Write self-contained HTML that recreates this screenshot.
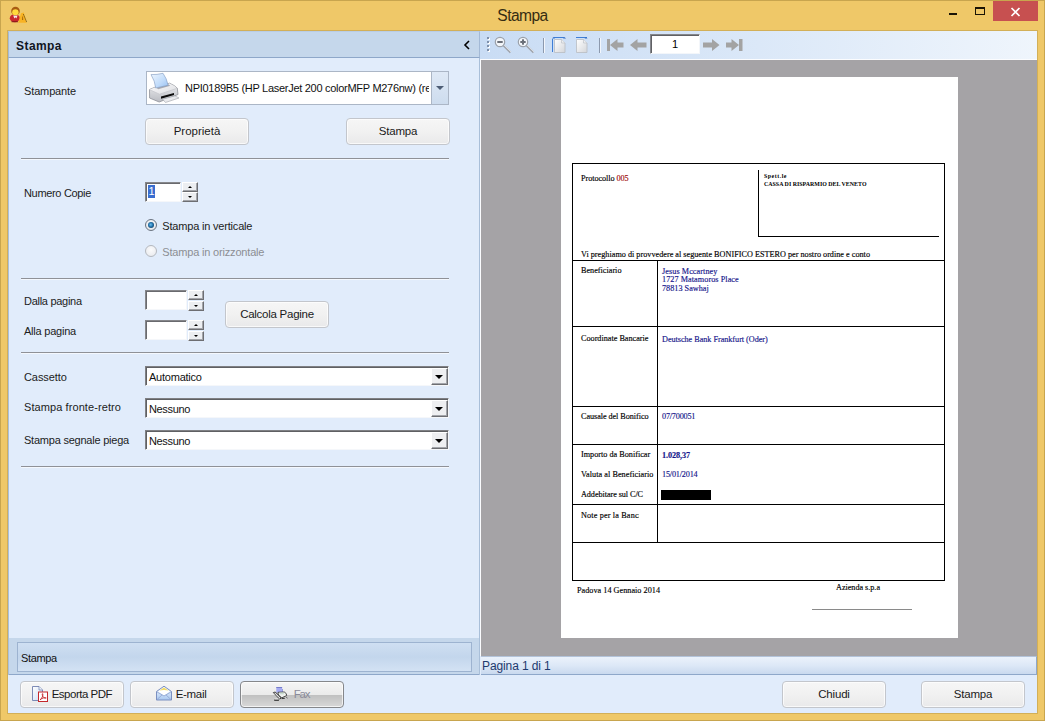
<!DOCTYPE html>
<html><head><meta charset="utf-8"><title>Stampa</title>
<style>
*{box-sizing:border-box;margin:0;padding:0}
html,body{width:1045px;height:721px;overflow:hidden}
body{background:#efc868;font-family:"Liberation Sans",sans-serif;font-size:11px;color:#1a1a1a;position:relative}
.abs{position:absolute}
#frame{left:0;top:0;width:1045px;height:721px;border:1px solid #c8a54e;background:#efc868}
#title{left:0;top:6.600px;width:1045px;text-align:center;font-size:15.600px;line-height:18px;color:#362c12}
#content{left:7px;top:30px;width:1031px;height:684px;background:#e1ecfb;border:1px solid #d2af58}
/* left panel */
#lp{left:8px;top:31px;width:472px;height:644px;background:#e1ecfb;border:1px solid #a9bfd9;border-top:none}
#lph{left:8px;top:31px;width:472px;height:27px;background:#c5d7eb;border:1px solid #a3b9d6;border-top:1px solid #b9cde6;border-bottom:1px solid #8ea7c9}
#lph b{position:absolute;left:7px;top:7px;font-size:12px;line-height:14px;color:#10151f}
.lbl{position:absolute;left:24px;font-size:11px;line-height:13px;white-space:nowrap;color:#1c1c1c}
.sep{position:absolute;left:21px;width:428px;height:2px;border-top:1px solid #8f9197;border-bottom:1px solid #f4f8fe}
.btn{position:absolute;height:27px;border:1px solid #c3c6cc;border-radius:4px;background:linear-gradient(#f6f6f6,#f1f1f1 50%,#e9e9ea);text-align:center;font-size:11.5px;line-height:25px;color:#1a1a1a;white-space:nowrap;box-shadow:inset 0 0 0 1px rgba(255,255,255,.7)}
.combo{position:absolute;left:145px;width:304px;height:20px;background:#fff;border:1px solid;border-color:#7f8084 #f5f7fa #f5f7fa #7f8084;box-shadow:inset 1px 1px 0 #5f6063;font-size:11px;line-height:16px;padding:2px 0 0 3px;color:#111}
.combo i{position:absolute;right:0;top:1px;width:17px;height:17px;background:#eeeff1;border:1px solid;border-color:#fff #6d6e72 #6d6e72 #fff;box-shadow:inset -1px -1px 0 #a3a5aa}
.combo i:after{content:"";position:absolute;left:3px;top:6px;border:4px solid transparent;border-top:4px solid #000;border-bottom:none}
.spin{position:absolute;height:20px;background:#fff;border:1px solid;border-color:#86878b #f5f7fa #f5f7fa #86878b;box-shadow:inset 1px 1px 0 #696a6e}
.sb{position:absolute;width:16px;height:10px;background:#eceef1;border:1px solid;border-color:#fff #6d6e72 #6d6e72 #fff;box-shadow:inset -1px -1px 0 #a3a5aa}
.sb:after{content:"";position:absolute;left:5px;top:3px;border:2px solid transparent}
.sb.up:after{border-bottom:2px solid #000;border-top:none}
.sb.dn:after{border-top:2px solid #000;border-bottom:none}

.radio{position:absolute;width:12px;height:12px;border-radius:50%;border:1px solid #6b7480;background:radial-gradient(circle at 50% 40%,#fff,#d9dde3)}
.radio u{position:absolute;left:2px;top:2px;width:6px;height:6px;border-radius:50%;background:radial-gradient(circle at 45% 45%,#6fc0ee,#2272aa 45%,#123a5e 80%)}
.radio.dis{border-color:#b4b8be;background:radial-gradient(circle at 50% 40%,#fbfbfc,#e6e8ec)}

#doc{position:absolute;left:0;top:0;font-family:"Liberation Serif",serif;font-size:8.2px;line-height:10px;color:#000}
#doc div{position:absolute;white-space:nowrap}
#doc .t{color:#000;margin-top:1.2px;-webkit-text-stroke:.15px #000}
#doc .v{color:#15158a;margin-top:1.2px;-webkit-text-stroke:.15px #15158a}
#doc .hl{left:572px;width:373px;height:1px;background:#000}
</style></head><body>
<div id="frame" class="abs"></div>
<div id="title" class="abs"><span style="letter-spacing:-0.558px">Stampa</span></div>
<div id="content" class="abs"></div>
<div id="lp" class="abs"></div>
<div id="lph" class="abs"><b><span style="letter-spacing:0.440px">Stampa</span></b></div>

<!-- left panel content -->
<svg class="abs" style="left:463px;top:40px" width="8" height="10" viewBox="0 0 8 10"><path d="M6 1 L2 5 L6 9" fill="none" stroke="#000" stroke-width="1.6"/></svg>
<div class="lbl" style="top:85px"><span style="letter-spacing:-0.134px">Stampante</span></div>
<div class="abs" id="pcombo" style="left:146px;top:71px;width:303px;height:34px;background:#fff;border:1px solid #abb6c6">
  <div class="abs" style="left:38px;top:9.700px;font-size:11px;line-height:13px;white-space:nowrap;width:244px;overflow:hidden;color:#111"><span style="letter-spacing:-0.286px">NPI0189B5 (HP LaserJet 200 colorMFP M276nw) (re</span></div>
  <div class="abs" style="right:0;top:0;width:17px;height:32px;background:linear-gradient(#dfe9f6,#cddcee);border-left:1px solid #abb6c6"></div>
  <div class="abs" style="right:4px;top:14px;border:4px solid transparent;border-top:4px solid #4d5d75;border-bottom:none"></div>
</div>
<div class="btn" style="left:145px;top:118px;width:104px"><span style="letter-spacing:0.009px">Proprietà</span></div>
<div class="btn" style="left:346px;top:118px;width:104px"><span style="letter-spacing:-0.207px">Stampa</span></div>
<div class="sep" style="top:158px"></div>
<div class="lbl" style="top:187px"><span style="letter-spacing:-0.327px">Numero Copie</span></div>
<div class="spin" style="left:145px;top:182px;width:36px"><span class="abs" style="left:2px;top:2px;width:7px;height:13px;text-align:center;background:#3a6ed0;color:#fff;font-size:11px;line-height:13px">1</span></div>
<div class="sb up" style="left:182px;top:182px"></div><div class="sb dn" style="left:182px;top:192px"></div>
<div class="radio" style="left:145px;top:219px"><u></u></div>
<div class="lbl" style="left:162.300px;top:220px"><span style="letter-spacing:-0.187px">Stampa in verticale</span></div>
<div class="radio dis" style="left:145px;top:245px"></div>
<div class="lbl" style="left:162.300px;top:246px;color:#8c8e93"><span style="letter-spacing:-0.180px">Stampa in orizzontale</span></div>
<div class="sep" style="top:278px"></div>
<div class="lbl" style="top:295px"><span style="letter-spacing:-0.284px">Dalla pagina</span></div>
<div class="spin" style="left:145px;top:290px;width:42px"></div>
<div class="sb up" style="left:188px;top:290px"></div><div class="sb dn" style="left:188px;top:301px"></div>
<div class="lbl" style="top:325px"><span style="letter-spacing:-0.222px">Alla pagina</span></div>
<div class="spin" style="left:145px;top:320px;width:42px"></div>
<div class="sb up" style="left:188px;top:320px"></div><div class="sb dn" style="left:188px;top:331px"></div>
<div class="btn" style="left:225px;top:301px;width:104px"><span style="letter-spacing:-0.258px">Calcola Pagine</span></div>
<div class="sep" style="top:352px"></div>
<div class="lbl" style="top:371px"><span style="letter-spacing:-0.084px">Cassetto</span></div>
<div class="combo" style="top:366px"><span style="letter-spacing:-0.228px">Automatico</span><i></i></div>
<div class="lbl" style="top:401px"><span style="letter-spacing:0.086px">Stampa fronte-retro</span></div>
<div class="combo" style="top:398px"><span style="letter-spacing:-0.346px">Nessuno</span><i></i></div>
<div class="lbl" style="top:434px"><span style="letter-spacing:-0.223px">Stampa segnale piega</span></div>
<div class="combo" style="top:430px"><span style="letter-spacing:-0.346px">Nessuno</span><i></i></div>
<div class="sep" style="top:466px"></div>
<!-- nav band -->
<div class="abs" style="left:9px;top:638px;width:470px;height:37px;background:#c5d7eb;border-bottom:1px solid #8ea7c9"></div>
<div class="abs" style="left:17px;top:642px;width:455px;height:30px;border:1px solid #9db3d0;background:linear-gradient(#cfdff2,#c3d6ec 50%,#d3e2f4)"><span class="abs" style="left:3px;top:9px;font-size:11px;line-height:13px;color:#111"><span style="letter-spacing:-0.370px">Stampa</span></span></div>

<!-- right side -->
<div class="abs" id="tb" style="left:480px;top:31px;width:557px;height:29px;background:linear-gradient(90deg,#c9dcf4,#dbe8f8 50%,#eff5fc);border-bottom:1px solid #f4f8fd"></div>
<div class="abs" id="gray" style="left:480px;top:59px;width:557px;height:597px;background:#a5a3a6;border-left:1px solid #fbfcfe;border-top:1px solid #fbfcfe"></div>
<div class="abs" id="page" style="left:561px;top:77px;width:397px;height:561px;background:#fff"></div>
<div class="abs" id="status" style="left:481px;top:656px;width:556px;height:19px;background:linear-gradient(#ebf2fb,#dde8f7 50%,#c9d9ee);border-top:1px solid #b3c3d9;border-bottom:1px solid #8ea7c9;border-right:1px solid #8ea7c9"><span class="abs" style="left:1px;top:2px;font-size:12px;line-height:14px;color:#1e3a6e;white-space:nowrap"><span style="letter-spacing:-0.113px">Pagina 1 di 1</span></span></div>
<div id="doc">
<div style="left:572px;top:163px;width:373px;height:418px;border:1px solid #000"></div>
<div class="hl" style="top:260px"></div>
<div class="hl" style="top:326px"></div>
<div class="hl" style="top:406px"></div>
<div class="hl" style="top:444px"></div>
<div class="hl" style="top:504px"></div>
<div class="hl" style="top:542px"></div>
<div style="left:657px;top:260px;width:1px;height:283px;background:#000"></div>
<div style="left:758px;top:170px;width:181px;height:67px;border-left:1px solid #000;border-bottom:1px solid #000"></div>
<div class="t" style="left:581px;top:173.2px;"><span style="letter-spacing:-0.068px">Protocollo <span style="color:#a00808;-webkit-text-stroke:.15px #a00808">005</span></span></div>
<div style="left:764px;top:171.6px;font-size:5.9px;line-height:8px;font-weight:bold"><span style="letter-spacing:0.521px">Spett.le</span></div>
<div style="left:764px;top:179.6px;font-size:5.9px;line-height:8px;font-weight:bold"><span style="letter-spacing:0.024px">CASSA DI RISPARMIO DEL VENETO</span></div>
<div class="t" style="left:581px;top:249.2px;"><span style="letter-spacing:0.009px">Vi preghiamo di provvedere al seguente BONIFICO ESTERO per nostro ordine e conto</span></div>
<div class="t" style="left:581px;top:264.7px;"><span style="letter-spacing:0.003px">Beneficiario</span></div>
<div class="v" style="left:662px;top:265.9px;"><span style="letter-spacing:0.077px">Jesus Mccartney</span></div>
<div class="v" style="left:662px;top:274.2px;"><span style="letter-spacing:0.062px">1727 Matamoros Place</span></div>
<div class="v" style="left:662px;top:283.2px;"><span style="letter-spacing:0.010px">78813 Sawhaj</span></div>
<div class="t" style="left:581px;top:332.5px;"><span style="letter-spacing:-0.002px">Coordinate Bancarie</span></div>
<div class="v" style="left:662px;top:334.2px;"><span style="letter-spacing:-0.030px">Deutsche Bank Frankfurt (Oder)</span></div>
<div class="t" style="left:581px;top:411.2px;"><span style="letter-spacing:-0.059px">Causale del Bonifico</span></div>
<div class="v" style="left:662px;top:411.2px;"><span style="letter-spacing:-0.198px">07/700051</span></div>
<div class="t" style="left:581px;top:448.7px;"><span style="letter-spacing:0.006px">Importo da Bonificar</span></div>
<div class="v" style="left:662px;top:450.2px;font-weight:bold"><span style="letter-spacing:-0.082px">1.028,37</span></div>
<div class="t" style="left:581px;top:468.5px;"><span style="letter-spacing:0.050px">Valuta al Beneficiario</span></div>
<div class="v" style="left:662px;top:469.2px;"><span style="letter-spacing:-0.181px">15/01/2014</span></div>
<div class="t" style="left:581px;top:489.0px;"><span style="letter-spacing:-0.068px">Addebitare sul C/C</span></div>
<div style="left:661px;top:490px;width:50px;height:10px;background:#000"></div>
<div class="t" style="left:581px;top:509.7px;width:58.300px;overflow:hidden"><span style="letter-spacing:0.153px">Note per la Banca</span></div>
<div class="t" style="left:577px;top:585.2px;"><span style="letter-spacing:0.021px">Padova 14 Gennaio 2014</span></div>
<div class="t" style="left:836px;top:582.2px;"><span style="letter-spacing:-0.026px">Azienda s.p.a</span></div>
<div style="left:812px;top:609px;width:100px;height:1px;background:#8a8a8a"></div>
</div>
<!-- bottom buttons -->
<div class="btn" style="left:20px;top:681px;width:104px;text-align:left;padding-left:30.7px"><span style="letter-spacing:-0.503px">Esporta PDF</span></div>
<div class="btn" style="left:130px;top:681px;width:104px;text-align:left;padding-left:44.7px"><span style="letter-spacing:-0.316px">E-mail</span></div>
<div class="btn" id="fax" style="left:240px;top:681px;width:104px;border-color:#85878b;background:linear-gradient(#f5f5f5,#ebebeb 50%,#bfbfbf 50%,#d8d8d8);color:#8b8b9a;text-align:left;padding-left:52.8px"><span style="letter-spacing:-1.224px">Fax</span></div>
<div class="btn" style="left:782px;top:681px;width:104px"><span style="letter-spacing:-0.185px">Chiudi</span></div>
<div class="btn" style="left:921px;top:681px;width:104px"><span style="letter-spacing:-0.157px">Stampa</span></div>
<!-- window controls -->
<div class="abs" style="left:993px;top:1px;width:45px;height:20px;background:#c75050"></div>
<svg class="abs" style="left:1010px;top:6.500px" width="11" height="10" viewBox="0 0 11 10"><path d="M1.500 1 L9.500 9 M9.500 1 L1.500 9" stroke="#fff" stroke-width="1.700" fill="none"/></svg>
<div class="abs" style="left:949px;top:13px;width:8px;height:2px;background:#1a1405"></div>
<div class="abs" style="left:975px;top:7px;width:10px;height:8px;border:1px solid #1a1405;border-top-width:2px"></div>

<!-- app icon -->
<svg class="abs" style="left:8px;top:5px" width="20" height="20" viewBox="0 0 20 20">
<ellipse cx="6.8" cy="13.2" rx="5" ry="4" fill="#c9282c"/><path d="M3.5 16.3h6.5v.9h-6.5z" fill="#7a1418"/>
<path d="M5.2 10.4l1.2 3 1-1.2 1 1.2 1.2-3z" fill="#f4e9e9"/>
<circle cx="7.5" cy="6" r="4.3" fill="#a85c12"/><ellipse cx="7.4" cy="7.2" rx="3.2" ry="3" fill="#ffd93c"/>
<path d="M13 8.200 L15.800 7.600 L18.800 17.800 H10.200 Z" fill="#f8b324"/><path d="M14.2 11.5l.8 0 .2 3.4h-1.2z" fill="#a86a10"/>
<path d="M15.5 9.5l3.2 7.6" stroke="#2a1a05" stroke-width="1" stroke-dasharray="1 1.2" fill="none"/>
</svg>
<!-- printer icon -->
<svg class="abs" style="left:148px;top:72px" width="32" height="32" viewBox="0 0 32 32">
<defs><linearGradient id="pg" x1="0" y1="0" x2="1" y2="1"><stop offset="0" stop-color="#eef6ff"/><stop offset=".6" stop-color="#c0dbfa"/><stop offset="1" stop-color="#98c0f2"/></linearGradient>
<linearGradient id="bt" x1="0" y1="0" x2="1" y2="1"><stop offset="0" stop-color="#fbfbfc"/><stop offset="1" stop-color="#dcdde1"/></linearGradient>
<linearGradient id="bf" x1="0" y1="0" x2="0" y2="1"><stop offset="0" stop-color="#eeeff1"/><stop offset="1" stop-color="#b9bbc2"/></linearGradient></defs>
<path d="M1.500 17.500 L7.500 15 L21.500 11.200 Q27 13.500 29.300 16.200 L30 22.500 L11.200 30 L1.600 26 Z" fill="url(#bf)" stroke="#8e9098" stroke-width=".8" stroke-linejoin="round"/>
<path d="M1.700 17.600 L7.500 15.200 L21.500 11.400 Q26.500 13.500 29 16.300 L11.500 22.200 Z" fill="url(#bt)"/>
<path d="M1.700 17.800 L11.500 22.200 L29 16.400" fill="none" stroke="#c4c6cc" stroke-width=".7"/>
<path d="M8.500 15.800 L20.500 12.600 L22.300 13.800 L10.200 17.200Z" fill="#a9abb3"/>
<path d="M3 2.600 Q9 2.800 15 1.300 Q18.500 6 20.200 13.200 L7.700 16 Q7 9 3 2.600Z" fill="url(#pg)" stroke="#7d97bd" stroke-width=".6"/>
<path d="M13 24.500 L26 21 L26 23 L13 26.800Z" fill="#0c0c0c"/>
<path d="M14.500 27.200 L27 23.900 L31 26 L17.500 30.500Z" fill="#e9eaed" stroke="#a0a2a9" stroke-width=".6"/>
</svg>
<!-- toolbar icons -->
<svg class="abs" style="left:481px;top:31px" width="270" height="28" viewBox="0 0 270 28">
<g fill="#fff"><rect x="7" y="7" width="2" height="2"/><rect x="7" y="11" width="2" height="2"/><rect x="7" y="15" width="2" height="2"/><rect x="7" y="19" width="2" height="2"/></g>
<g fill="#7f90ab"><rect x="6" y="6" width="2" height="2"/><rect x="6" y="10" width="2" height="2"/><rect x="6" y="14" width="2" height="2"/><rect x="6" y="18" width="2" height="2"/></g>
<!-- zoom out -->
<path d="M22.5 14.5 L29.5 21.5" stroke="#a1a6ae" stroke-width="2"/><path d="M23 14 L30 21" stroke="#e6e9ee" stroke-width=".8"/>
<circle cx="19" cy="11" r="4.7" fill="#f3f6fa" stroke="#9ba1aa" stroke-width="1.2"/><rect x="16.3" y="10" width="5.4" height="2" fill="#6a6f78"/>
<!-- zoom in -->
<path d="M45.5 14.5 L52.5 21.5" stroke="#a1a6ae" stroke-width="2"/><path d="M46 14 L53 21" stroke="#e6e9ee" stroke-width=".8"/>
<circle cx="42" cy="11" r="4.7" fill="#f3f6fa" stroke="#9ba1aa" stroke-width="1.2"/><rect x="39.3" y="10" width="5.4" height="2" fill="#6a6f78"/><rect x="41" y="8.3" width="2" height="5.4" fill="#6a6f78"/>
<!-- sep -->
<rect x="62" y="7" width="1" height="15" fill="#8c99ae"/><rect x="63" y="7" width="1" height="15" fill="#f2f6fc"/>
<!-- page 1 -->
<defs><linearGradient id="pp" x1="0" y1="0" x2="1" y2="1"><stop offset="0" stop-color="#fff"/><stop offset="1" stop-color="#d4d6da"/></linearGradient></defs>
<path d="M73.5 8.5 H80.5 L84 12 V21.5 H73.5Z" fill="url(#pp)" stroke="#b9bcc2" stroke-width=".8"/><path d="M80.5 8.5 V12 H84" fill="#eceef0" stroke="#b9bcc2" stroke-width=".6"/>
<path d="M73 6.5 H83" stroke="#3f7ed6" stroke-width="1"/><path d="M71.5 8 V21" stroke="#3f7ed6" stroke-width="1"/>
<path d="M72.5 6 l1.5 1.5 h-3z M83.5 6 l1.5 1.5 h-3z" fill="#2f6cc4"/>
<!-- page 2 -->
<path d="M95.500 8.500 H102.500 L106 12 V21.500 H95.500Z" fill="url(#pp)" stroke="#b9bcc2" stroke-width=".8"/><path d="M102.500 8.500 V12 H106" fill="#eceef0" stroke="#b9bcc2" stroke-width=".6"/>
<path d="M95 6.500 H106" stroke="#3f7ed6" stroke-width="1"/><path d="M105 6 l1.500 1.500 h-3z" fill="#2f6cc4"/>
<!-- sep -->
<rect x="118" y="7" width="1" height="15" fill="#8c99ae"/><rect x="119" y="7" width="1" height="15" fill="#f2f6fc"/>
<!-- arrows -->
<g fill="#a3a3a3">
<rect x="126" y="8" width="3" height="12"/><path d="M129 14 L136.500 8 V11.500 H142.500 V16.500 H136.500 V20Z"/>
<path d="M149 14 L156.500 8 V11.500 H165.500 V16.500 H156.500 V20Z"/>
<path d="M238.500 14 L231 8 V11.500 H222 V16.500 H231 V20Z"/>
<rect x="258" y="8" width="3.500" height="12"/><path d="M258 14 L250.500 8 V11.500 H245 V16.500 H250.500 V20Z"/>
</g>
</svg>
<div class="abs" style="left:650px;top:34px;width:50px;height:20px;background:#fff;border:1px solid;border-color:#84868b #f3f6fa #f3f6fa #84868b;box-shadow:inset 1px 1px 0 #606165;text-align:center;font-size:11px;line-height:19px;color:#000">1</div>
<!-- button icons -->
<svg class="abs" style="left:31px;top:685px" width="18" height="18" viewBox="0 0 18 18">
<defs><linearGradient id="dp" x1="0" y1="0" x2="1" y2="1"><stop offset="0" stop-color="#fff"/><stop offset="1" stop-color="#c9dcf6"/></linearGradient></defs>
<path d="M1.500 1.500 H8 L11.500 5 V15.500 H1.500Z" fill="url(#dp)" stroke="#6f7fae" stroke-width=".9"/><path d="M8 1.500 V5 H11.500" fill="#eef3fb" stroke="#6f7fae" stroke-width=".7"/>
<rect x="7.500" y="7" width="9" height="9.500" fill="#fff" stroke="#c4282c" stroke-width="1"/>
<path d="M9 14.800 C11 13.500 12.300 10.500 11.800 8.800 C11.300 8 10.800 9.500 11.800 11.300 C12.800 13 14.500 13.600 15.200 13 C15 12.200 11.500 12.600 9 14.800Z" fill="none" stroke="#c4282c" stroke-width=".9"/>
</svg>
<svg class="abs" style="left:155px;top:685px" width="18" height="17" viewBox="0 0 18 17">
<defs><linearGradient id="ev" x1="0" y1="0" x2="0" y2="1"><stop offset="0" stop-color="#f7faff"/><stop offset="1" stop-color="#a9c8f0"/></linearGradient></defs>
<path d="M1.500 6.500 L9 1.200 L16.500 6.500 V15 H1.500Z" fill="url(#ev)" stroke="#7b8fc0" stroke-width="1" stroke-linejoin="round"/>
<path d="M3 6.500 L9 2.600 L15 6.500 L9 10.500Z" fill="#fff"/><path d="M4.500 5.600 L9 2.600 L13.500 5.600 Q9 4.200 4.500 5.600Z" fill="#f3dc6a"/>
<path d="M1.800 6.800 L9 11 L16.200 6.800 M1.800 14.800 L7 9.900 M16.200 14.800 L11 9.900" fill="none" stroke="#8ea2cf" stroke-width=".8"/>
</svg>
<svg class="abs" style="left:272px;top:686px" width="17" height="16" viewBox="0 0 17 16">
<rect x="4.300" y="1" width="5.800" height="5.600" fill="#a6abf2"/><rect x="4.300" y="1" width="5.800" height=".9" fill="#7176c6"/><rect x="10.100" y="3" width=".9" height="3.500" fill="#8d92dc"/>
<path d="M6 6.300 L12.300 6 Q15.200 7.600 14.600 9.600 L9.600 11.900 L6.300 9 Z" fill="#eef1ee" stroke="#262626" stroke-width=".8" stroke-linejoin="round"/>
<path d="M7.200 6.600 H11.600 L12 8.200 H7.800Z" fill="#c9dccf"/>
<path d="M1.400 6.600 L3.300 6 L9.200 11.900 L7.600 13.100 Z" fill="#dcdcdc" stroke="#1e1e1e" stroke-width=".9" stroke-linejoin="round"/>
<path d="M2.600 7.200 L7.800 12.300" stroke="#fff" stroke-width=".7" stroke-dasharray="1 1"/>
<path d="M2.200 14.100 H6.900" stroke="#111" stroke-width="1.200"/><path d="M2.600 13 H6.500" stroke="#f4f4f4" stroke-width=".8"/>
<path d="M9.800 12.600 L12.800 12.300" stroke="#262626" stroke-width=".9"/><path d="M14.200 11.200 l1.300 .9" stroke="#444" stroke-width=".8"/>
</svg>
</body></html>
